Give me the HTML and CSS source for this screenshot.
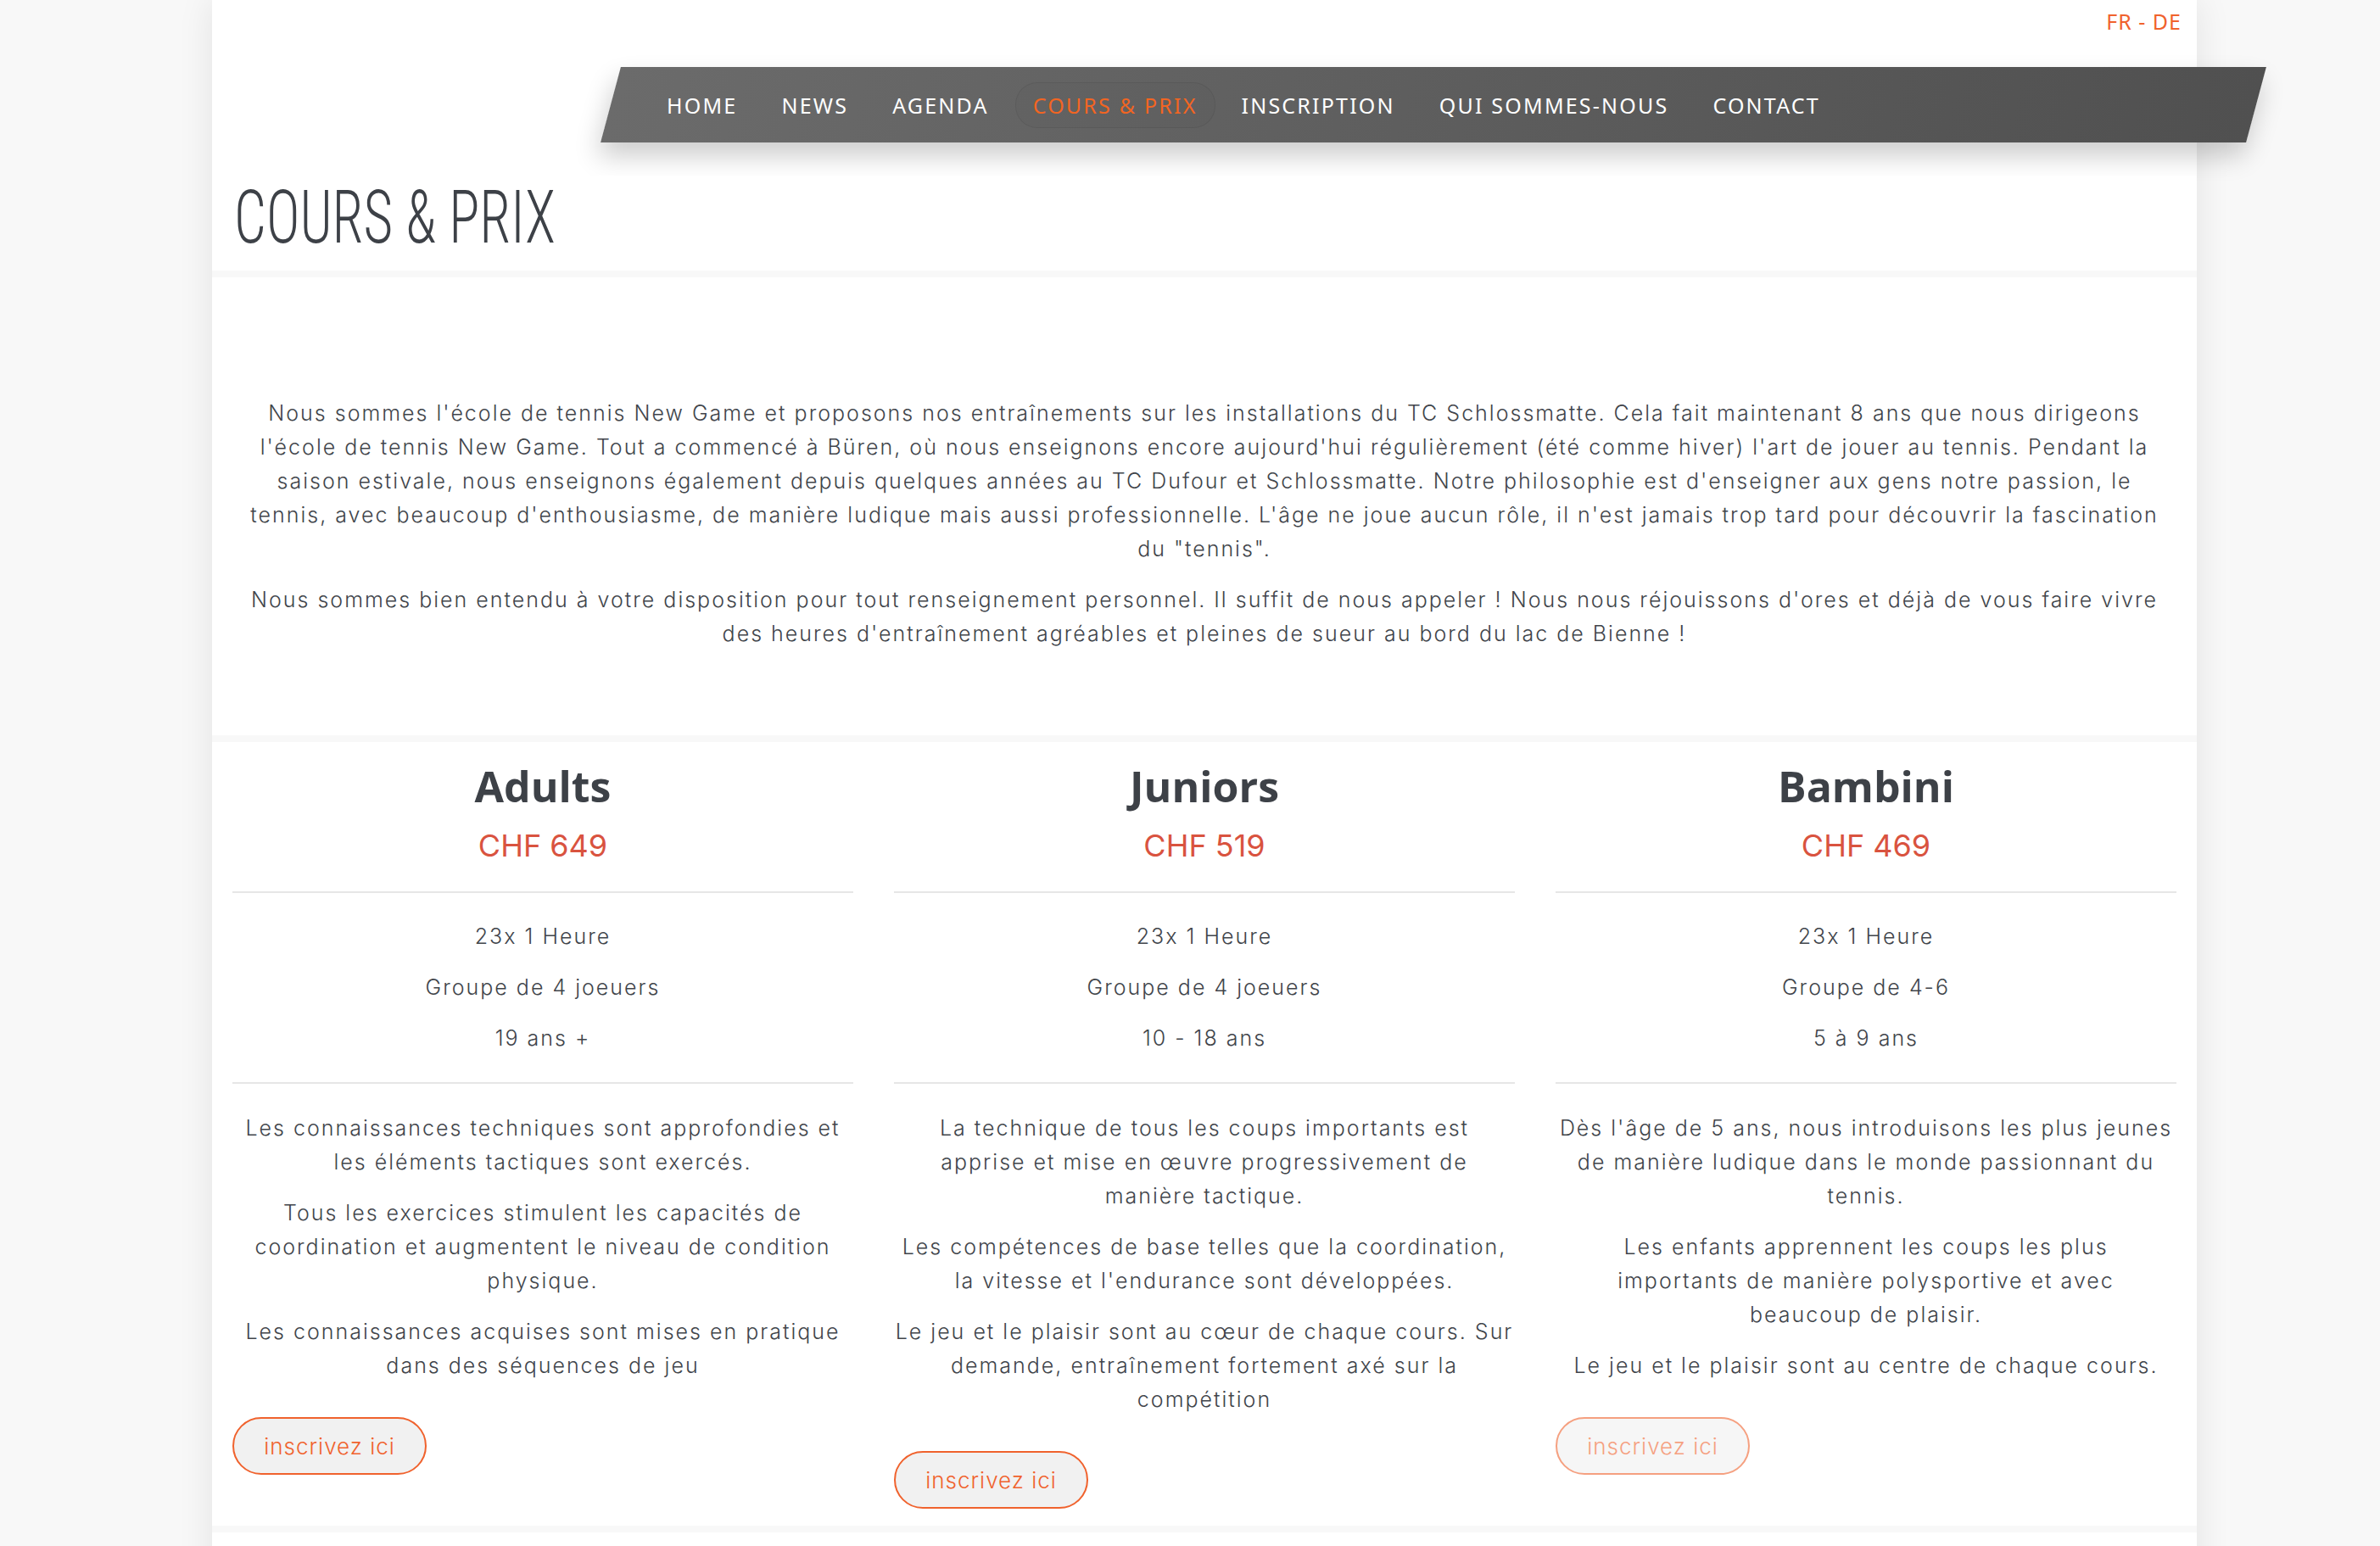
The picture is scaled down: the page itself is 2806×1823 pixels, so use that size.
FILE: index.html
```html
<!DOCTYPE html>
<html lang="fr">
<head>
  <meta charset="UTF-8" />
  <meta name="viewport" content="width=device-width, initial-scale=1.0"/>
  <title>Cours &amp; Prix - New Game</title>
  <link rel="stylesheet" href="styles.css">
</head>
<body>
  <div class="page">
    <header class="site-header">
      <div class="lang"><a href="#">FR</a> - <a href="#">DE</a></div>
      <nav class="main-nav">
        <a href="#">Home</a>
        <a href="#">News</a>
        <a href="#">Agenda</a>
        <a href="#" class="active">Cours &amp; Prix</a>
        <a href="#">Inscription</a>
        <a href="#">Qui sommes-nous</a>
        <a href="#">Contact</a>
      </nav>
    </header>

    <section class="page-title">
      <h1>Cours &amp; Prix</h1>
    </section>

    <section class="intro">
      <p>Nous sommes l'école de tennis New Game et proposons nos entraînements sur les installations du TC Schlossmatte. Cela fait maintenant 8 ans que nous dirigeons l'école de tennis New Game. Tout a commencé à Büren, où nous enseignons encore aujourd'hui régulièrement (été comme hiver) l'art de jouer au tennis. Pendant la saison estivale, nous enseignons également depuis quelques années au TC Dufour et Schlossmatte. Notre philosophie est d'enseigner aux gens notre passion, le tennis, avec beaucoup d'enthousiasme, de manière ludique mais aussi professionnelle. L'âge ne joue aucun rôle, il n'est jamais trop tard pour découvrir la fascination du "tennis".</p>
      <p>Nous sommes bien entendu à votre disposition pour tout renseignement personnel. Il suffit de nous appeler ! Nous nous réjouissons d'ores et déjà de vous faire vivre des heures d'entraînement agréables et pleines de sueur au bord du lac de Bienne !</p>
    </section>

    <section class="plans">
      <div class="plan">
        <h3>Adults</h3>
        <div class="price">CHF 649</div>
        <ul class="features">
          <li>23x 1 Heure</li>
          <li>Groupe de 4 joeuers</li>
          <li>19 ans +</li>
        </ul>
        <div class="plan-text">
          <p>Les connaissances techniques sont approfondies et les éléments tactiques sont exercés.</p>
          <p>Tous les exercices stimulent les capacités de coordination et augmentent le niveau de condition physique.</p>
          <p>Les connaissances acquises sont mises en pratique dans des séquences de jeu</p>
        </div>
        <a href="#" class="btn">inscrivez ici</a>
      </div>

      <div class="plan">
        <h3>Juniors</h3>
        <div class="price">CHF 519</div>
        <ul class="features">
          <li>23x 1 Heure</li>
          <li>Groupe de 4 joeuers</li>
          <li>10 - 18 ans</li>
        </ul>
        <div class="plan-text">
          <p>La technique de tous les coups importants est apprise et mise en œuvre progressivement de manière tactique.</p>
          <p>Les compétences de base telles que la coordination, la vitesse et l'endurance sont développées.</p>
          <p>Le jeu et le plaisir sont au cœur de chaque cours. Sur demande, entraînement fortement axé sur la compétition</p>
        </div>
        <a href="#" class="btn">inscrivez ici</a>
      </div>

      <div class="plan">
        <h3>Bambini</h3>
        <div class="price">CHF 469</div>
        <ul class="features">
          <li>23x 1 Heure</li>
          <li>Groupe de 4-6</li>
          <li>5 à 9 ans</li>
        </ul>
        <div class="plan-text">
          <p>Dès l'âge de 5 ans, nous introduisons les plus jeunes de manière ludique dans le monde passionnant du tennis.</p>
          <p>Les enfants apprennent les coups les plus<br>importants de manière polysportive et avec<br>beaucoup de plaisir.</p>
          <p>Le jeu et le plaisir sont au centre de chaque cours.</p>
        </div>
        <a href="#" class="btn btn-faded">inscrivez ici</a>
      </div>
    </section>

    <section class="footer-space"></section>
  </div>
</body>
</html>
```

FILE: styles.css
```css
body {
  margin: 0;
  background-color: #f8f8f8;
  font-family: 'Inter', 'Open Sans', sans-serif;
  font-weight: 350;
  font-size: 25px;
  letter-spacing: 2px;
  color: #41454b;
}

a {
  text-decoration: none;
}

.page {
  width: 2340px;
  margin-left: 250px;
  background-color: #f8f8f8;
  box-shadow: 0 0 40px rgba(0, 0, 0, 0.09);
}

/* header */

.site-header {
  background-color: #fff;
  padding-bottom: 39px;
}

.lang {
  height: 50px;
  line-height: 50px;
  padding-right: 18px;
  text-align: right;
  font-family: 'Noto Sans', sans-serif;
  font-weight: 400;
  font-size: 25px;
  letter-spacing: 1px;
  color: #f0622d;
}

.lang a {
  color: #f0622d;
}

.main-nav {
  position: relative;
  z-index: 0;
  display: flex;
  align-items: center;
  gap: 10px;
  height: 89px;
  margin: 29px -70px 0 470px;
  padding-left: 45px;
}

.main-nav::before {
  content: '';
  position: absolute;
  inset: 0;
  z-index: -1;
  transform: skewX(-15deg);
  background: linear-gradient(to right, #6b6b6b, #505050);
  box-shadow: 0 16px 30px rgba(0, 0, 0, 0.2);
}

.main-nav a {
  display: flex;
  align-items: center;
  height: 52px;
  padding: 0 20px;
  border: 1px solid transparent;
  border-radius: 26px;
  font-family: 'Noto Sans', sans-serif;
  font-weight: 400;
  font-size: 25px;
  letter-spacing: 2.2px;
  text-transform: uppercase;
  color: #fff;
}

.main-nav a.active {
  color: #f26522;
  border-color: rgba(0, 0, 0, 0.07);
  background-color: rgba(0, 0, 0, 0.02);
}

/* title */

.page-title {
  position: relative;
  z-index: 1;
  background-color: #fff;
  height: 112px;
  padding: 6px 26px 0;
  box-sizing: border-box;
  margin-bottom: 8px;
}

.page-title h1 {
  margin: 0;
  font-family: 'Roboto Condensed', 'Roboto', sans-serif;
  font-stretch: condensed;
  font-weight: 300;
  font-size: 87px;
  line-height: 87px;
  letter-spacing: 0;
  text-transform: uppercase;
  color: #3d4147;
  transform: scaleX(0.77);
  transform-origin: left center;
}

/* intro */

.intro {
  background-color: #fff;
  padding: 140px 30px 80px;
  margin-bottom: 8px;
  text-align: center;
}

.intro p {
  margin: 0 0 20px;
  line-height: 40px;
}

/* plans */

.plans {
  display: grid;
  grid-template-columns: repeat(3, 1fr);
  gap: 48px;
  align-items: start;
  background-color: #fff;
  padding: 22px 24px 20px;
  margin-bottom: 8px;
}

.plan {
  text-align: center;
}

.plan h3 {
  margin: 0;
  font-family: 'Open Sans', sans-serif;
  font-weight: 700;
  font-size: 50px;
  line-height: 60px;
  letter-spacing: 0;
  color: #3d4147;
}

.price {
  margin: 13px 0 26px;
  font-weight: 400;
  font-size: 36px;
  line-height: 55px;
  letter-spacing: 0;
  color: #d9533f;
}

.features {
  list-style: none;
  margin: 0;
  padding: 31px 0 12px;
  border-top: 2px solid #e6e6e6;
  border-bottom: 2px solid #e6e6e6;
}

.features li {
  line-height: 40px;
  margin-bottom: 20px;
}

.plan-text {
  padding-top: 32px;
}

.plan-text p {
  margin: 0 0 20px;
  line-height: 40px;
}

.btn {
  display: flex;
  align-items: center;
  justify-content: center;
  width: 229px;
  height: 68px;
  box-sizing: border-box;
  margin-top: 41px;
  border: 2px solid #f0622d;
  border-radius: 34px;
  background-color: #f1f1f1;
  color: #f0622d;
  font-size: 26px;
  letter-spacing: 1px;
}

.btn-faded {
  opacity: 0.6;
}

.footer-space {
  background-color: #fff;
  height: 200px;
}
```
